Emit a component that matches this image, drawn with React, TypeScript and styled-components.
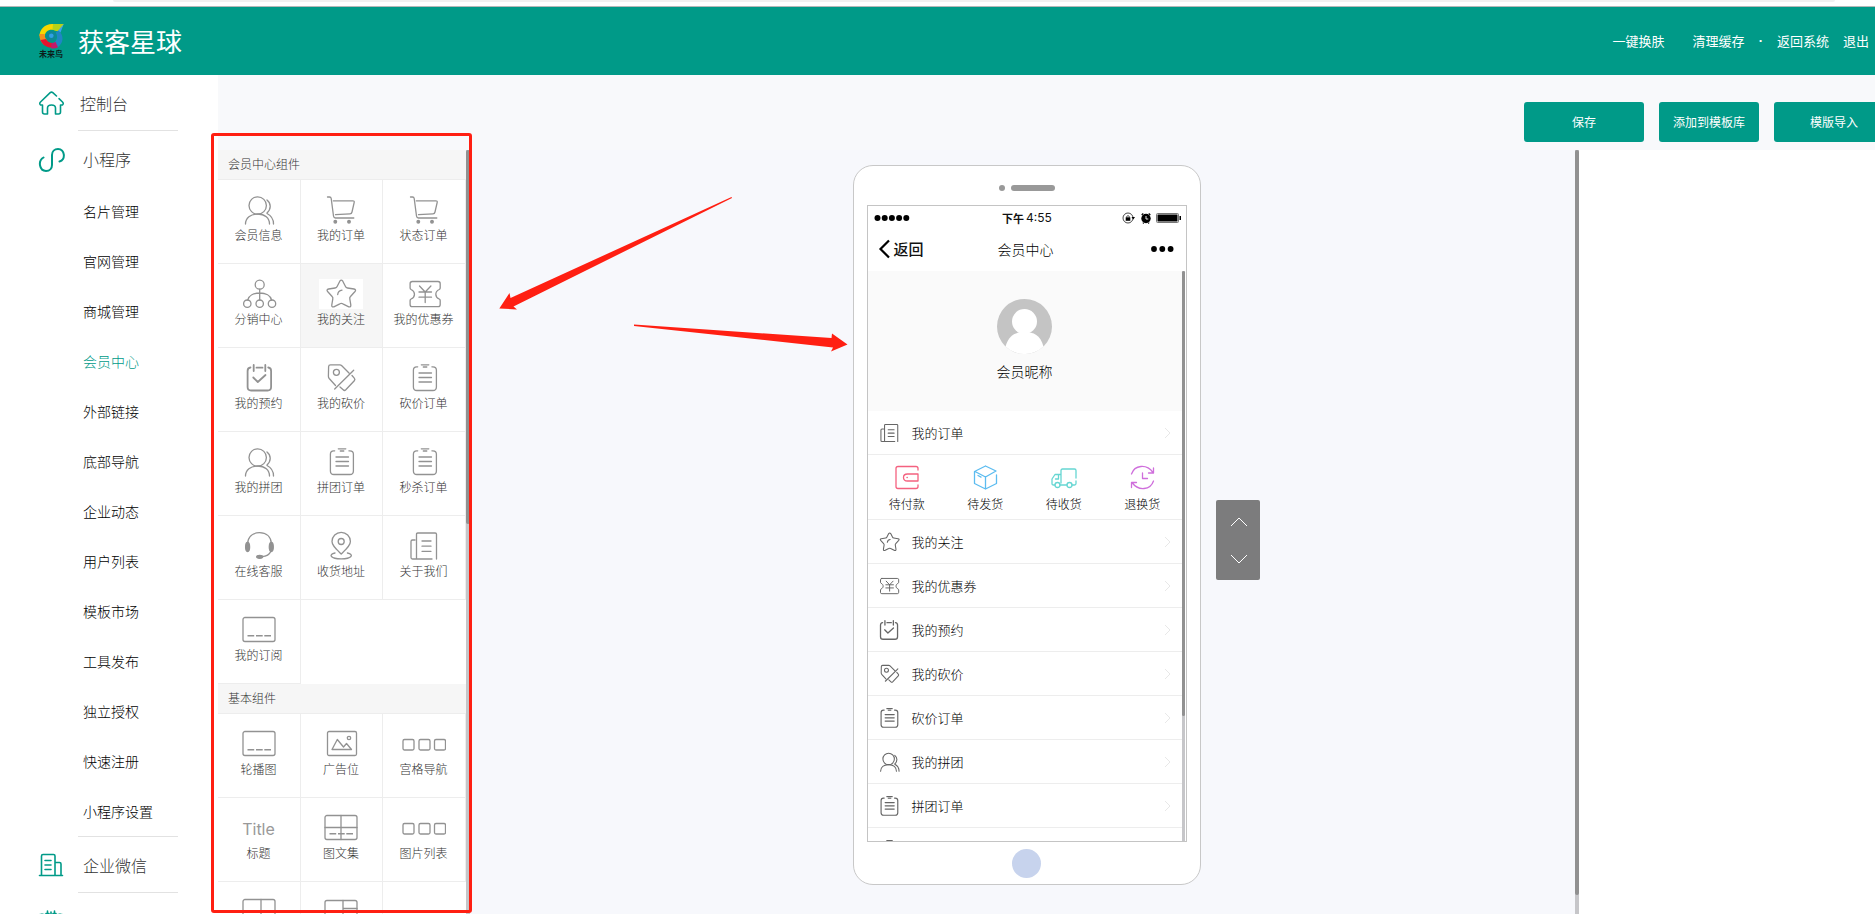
import React from "react";
import styled, { createGlobalStyle } from "styled-components";

const GREEN = "#009a88";
const LINE = "#ededed";
const RED = "#ff1f12";

const GlobalStyle = createGlobalStyle`
  * { box-sizing: border-box; }
  body {
    margin: 0;
    background: #fff;
    color: #111;
    font-family: "Noto Sans CJK SC", "Liberation Sans", sans-serif;
    font-size: 14px;
    font-weight: 300;
  }
  a { color: inherit; text-decoration: none; }
  button { font: inherit; color: inherit; border: 0; padding: 0; background: none; cursor: pointer; }
  svg { display: block; }
`;

/* ---------- icons ---------- */

type IconName =
  | "people" | "cart" | "share" | "star" | "coupon" | "calendar" | "tag" | "clipboard"
  | "headset" | "pin" | "news" | "banner" | "image" | "grid" | "imageText" | "columns" | "window";

const shapes: Record<IconName, React.ReactNode> = {
  people: (
    <>
      <circle cx="20.7" cy="10.5" r="8.7" />
      <path d="M8.5 29c0-6 5-10 12.200-10S32.500 23 32.500 29M30 5c4.300 3.500 4.300 9 0 13M30 18.500c4 2 6.500 5.500 6.500 10.500" />
    </>
  ),
  cart: (
    <>
      <path d="M8.500 2h2q1.500 0 1.700 1.500L14.500 21q.3 2 2 2h18.300M14.300 5.800h19.500q1.700 0 1.400 1.500L33 17q-.4 1.700-2 1.800l-14.500.8" />
      <circle cx="16.300" cy="26.700" r="1.300" fill="currentColor" />
      <circle cx="30" cy="26.700" r="1.300" fill="currentColor" />
    </>
  ),
  share: (
    <>
      <circle cx="22.700" cy="5.700" r="4.500" />
      <circle cx="10.300" cy="24.700" r="3.700" />
      <circle cx="22.700" cy="24.700" r="3.700" />
      <circle cx="35" cy="24.700" r="3.700" />
      <path d="M22.700 10.200V21M10.800 21c1-4.500 6-7 11.900-7s10.900 2.500 11.900 7" />
    </>
  ),
  star: (
    <path d="M20.800 2.200q1.500-2 3 0l2.700 5.300q.5 1.300 2 1.500l6.500 1q2.500.5 1 2.500l-4.500 5q-1 1-.7 2.300l1 6q.3 2.600-2 2l-6-3q-1.500-.8-3 0l-6 3q-2.400.6-2-2l1-6q.3-1.300-.7-2.300l-4.500-5q-1.500-2 1-2.500l6.500-1q1.500-.2 2-1.500zM18.700 15.500c.3-2.700 1.800-4 4.300-4.300" />
  ),
  coupon: (
    <path d="M10.300 2.500h25.700q2.200 0 2.200 2.200v4.300q0 1-1 1.500c-4.500 2-4.500 7.500 0 9.500q1 .5 1 1.500v4q0 2.200-2.200 2.200H10.300q-2.200 0-2.200-2.200v-4q0-1 1-1.500c4.500-2 4.500-7.500 0-9.500q-1-.5-1-1.500V4.700q0-2.200 2.200-2.200zM17.500 7l5.700 6 5.700-6M17 13h12.500M17 18.200h12.500M23.200 13v10.500" />
  ),
  calendar: (
    <path strokeWidth="1.800" d="M13.500 4.500q-2.900.3-2.900 3.500v16q0 3.500 3.500 3.500h16.500q3.500 0 3.500-3.500V8q0-3.200-2.900-3.500M16.700 2v6M28.300 2v6M19.500 4.700h6M16.300 14.500l4.500 4.500 7.700-7" />
  ),
  tag: (
    <>
      <path d="M30 10l-7.200-7.300q-.8-.8-2-.8H11.500q-1.800 0-1.900 1.800l-.2 9.600q0 1.200.8 2.200l6.300 7M34.700 7.300L15.700 26M33 12.500l2.300 2.700q1.200 1.300 0 2.600l-8.500 9q-1.300 1.300-2.600 0L21 24" />
      <circle cx="17.400" cy="9.300" r="3" />
    </>
  ),
  clipboard: (
    <path d="M15.700 3.800h-1q-3.300 0-3.300 3.500v16.700q0 3.500 3.500 3.500h16q3.500 0 3.500-3.500V7.300q0-3.500-3.500-3.500h-1M19.300 1.800h7.500M21.300 4h3.500M17 10h12.500M17 14.500h12.500M17 19h12.500" />
  ),
  headset: (
    <>
      <path d="M10.500 13C11 5.500 16 1.700 22.500 1.700S34 5.500 34.500 13M34 20c-1.500 3.500-4.500 5.500-9 5.700" />
      <ellipse cx="10.600" cy="16" rx="2" ry="4.500" fill="currentColor" />
      <ellipse cx="34.300" cy="16" rx="2" ry="4.500" fill="currentColor" />
      <ellipse cx="22.700" cy="25.800" rx="3" ry="1.500" fill="currentColor" />
    </>
  ),
  pin: (
    <>
      <path d="M22.200 23C16.500 17.500 13 14.500 13 10.500a9.200 9.200 0 0 1 18.400 0c0 4-3.500 7-9.200 12.500zM16 22c-7 1.500-4.500 5.800 6.200 5.800S35.400 23.500 28.400 22" />
      <circle cx="22.200" cy="10.500" r="3" />
    </>
  ),
  news: (
    <path d="M30 28H10.500q-1.500 0-1.500-1.500V10.500Q9 9 10.500 9h2.500M14.500 28V3.300q0-1.300 1.300-1.300h17.400q1.300 0 1.300 1.300V28M20 10h9M20 15.200h9M20 20.300h9" />
  ),
  banner: (
    <>
      <rect x="6" y="2.500" width="32" height="24" rx="2" />
      <path strokeWidth="1.600" strokeLinecap="butt" d="M10.500 20.700h6.700M19 20.700h6.700M27.300 20.700h6.700" />
    </>
  ),
  image: (
    <>
      <rect x="8.500" y="2.500" width="29" height="24" rx="1.500" />
      <circle cx="30" cy="9" r="1.700" />
      <path d="M13 20.500h19.500l-5-6-3 3.500-6.200-7.500z" />
    </>
  ),
  grid: (
    <>
      <rect x="1" y="10.500" width="11" height="10.500" rx="1.500" />
      <rect x="17" y="10.500" width="11" height="10.500" rx="1.500" />
      <rect x="32.500" y="10.500" width="11" height="10.500" rx="1.500" />
    </>
  ),
  imageText: (
    <>
      <rect x="6" y="2.500" width="32" height="24" rx="2" />
      <path d="M6 14.500h32M22 2.500v24" />
      <path strokeWidth="1.600" strokeLinecap="butt" d="M10.500 20.700h6.700M19 20.700h6.700M27.300 20.700h6.700" />
    </>
  ),
  columns: (
    <>
      <rect x="6" y="2.500" width="32" height="24" rx="2" />
      <path d="M24 2.500v24" />
    </>
  ),
  window: (
    <>
      <rect x="6" y="3.500" width="32" height="24" rx="2" />
      <path d="M24 3.500v24M24 11.500h14" />
    </>
  ),
};

/* list icons are drawn to a common optical size */
const smallBox: Partial<Record<IconName, string>> = {
  coupon: "-1 -1.5 48 33",
  calendar: "3 1 40 27.5",
  clipboard: "3 1 40 27.5",
};

const Glyph = styled.svg<{ $small?: boolean }>`
  flex: none;
  width: ${(p) => (p.$small ? 29 : 44)}px;
  height: ${(p) => (p.$small ? 20 : 30)}px;
  color: ${(p) => (p.$small ? "#666" : "#929292")};
  background: #fff;
  fill: none;
  stroke: currentColor;
  stroke-linecap: round;
  stroke-linejoin: round;
`;

const Icon = ({ name, small }: { name: IconName; small?: boolean }) => (
  <Glyph viewBox={(small && smallBox[name]) || "0 0 44 30"} $small={small} strokeWidth={small ? 1.6 : 1.3} aria-hidden>
    {shapes[name]}
  </Glyph>
);

/* ---------- page frame ---------- */

const Page = styled.div`
  position: relative;
  display: flex;
  flex-direction: column;
  height: 100vh;
  overflow: hidden;
`;

const BrowserEdge = styled.div`
  flex: none;
  height: 7px;
  padding: 0 40px 0 113px;
  border-bottom: 1px solid #b4b8b8;
  &::before {
    content: "";
    display: block;
    height: 2px;
    border-radius: 0 0 4px 4px;
    background: #f1f1f1;
  }
`;

const Header = styled.header`
  flex: none;
  display: flex;
  align-items: center;
  height: 68px;
  padding: 0 6px 0 38px;
  background: ${GREEN};
  color: #fff;
`;

const Brand = styled.h1`
  flex: 1;
  margin: 0 0 0 13px;
  font-size: 26px;
  font-weight: 400;
  line-height: 36px;
`;

const HeaderNav = styled.nav`
  display: flex;
  align-items: center;
  gap: 14px;
  font-size: 13px;
  font-weight: 400;
  line-height: 20px;
`;

const Dot = styled.span`
  font-family: "Liberation Sans", sans-serif;
  font-weight: 700;
`;

const SkinLink = styled.a`
  margin-right: 14px;
`;

const Body = styled.div`
  flex: 1;
  display: flex;
  min-height: 0;
`;

/* ---------- sidebar ---------- */

const Sidebar = styled.nav`
  flex: none;
  width: 218px;
  overflow: hidden;
  background: #fff;
`;

const Section = styled.a<{ $top?: boolean }>`
  display: flex;
  align-items: center;
  gap: ${(p) => (p.$top ? 15 : 18)}px;
  height: 55px;
  padding-left: 38px;
  font-size: 16px;
  line-height: 22px;
  color: #333;
  svg { flex: none; }
`;

const Divider = styled.hr`
  width: 100px;
  height: 1px;
  margin: 0 0 0 78px;
  border: 0;
  background: #e2e2e2;
`;

const SubItem = styled.a<{ $active?: boolean }>`
  display: block;
  height: 50px;
  padding-left: 83px;
  line-height: 50px;
  color: ${(p) => (p.$active ? GREEN : "#000")};
`;

const subItems = [
  "名片管理", "官网管理", "商城管理", "会员中心", "外部链接", "底部导航", "企业动态",
  "用户列表", "模板市场", "工具发布", "独立授权", "快速注册", "小程序设置",
];

const SideIcon = ({ children }: { children: React.ReactNode }) => (
  <svg width="27" height="26" viewBox="0 0 27 26" fill="none" stroke={GREEN} strokeWidth="1.600" strokeLinecap="round" strokeLinejoin="round" aria-hidden>
    {children}
  </svg>
);

/* ---------- workspace ---------- */

const Main = styled.main`
  flex: 1;
  display: flex;
  flex-direction: column;
  min-width: 0;
`;

const Toolbar = styled.div`
  flex: none;
  display: flex;
  justify-content: flex-end;
  gap: 15px;
  height: 75px;
  margin-right: -19px;
  padding-top: 27px;
  background: #f8f9fb;
`;

const ToolButton = styled.button<{ $compact?: boolean }>`
  flex: none;
  width: ${(p) => (p.$compact ? 100 : 120)}px;
  height: 40px;
  padding-bottom: 2px;
  border-radius: 3px;
  background: ${GREEN};
  color: #fff;
  font-size: 12px;
  font-weight: 400;
`;

const Workspace = styled.div`
  flex: 1;
  display: flex;
  min-height: 0;
`;

const PanelWrap = styled.aside`
  position: relative;
  z-index: 1;
  flex: none;
  display: flex;
  width: 252px;
`;

const Panel = styled.div`
  flex: 1;
  overflow: hidden;
  background: #fff;
`;

const ScrollTrack = styled.div<{ $width: number }>`
  flex: none;
  width: ${(p) => p.$width}px;
  background: #c6c6c9;
`;

const ScrollThumb = styled.div<{ $length: string }>`
  height: ${(p) => p.$length};
  border-radius: 2px;
  background: #919191;
`;

const PanelTitle = styled.h2`
  height: 30px;
  margin: 0;
  padding-left: 10px;
  border-bottom: 1px solid ${LINE};
  background: #f6f6f6;
  color: #333;
  font-size: 12px;
  font-weight: 300;
  line-height: 28px;
`;

const TileGrid = styled.div`
  display: grid;
  grid-template-columns: 83px 82px 83px;
`;

const Tile = styled.button<{ $hovered?: boolean }>`
  display: flex;
  flex-direction: column;
  align-items: center;
  height: 84px;
  padding: 15px 1px 0 0;
  border-right: 1px solid ${LINE};
  border-bottom: 1px solid ${LINE};
  background: ${(p) => (p.$hovered ? "#f6f6f6" : "#fff")};
  color: #333;
  font-size: 12px;
  line-height: 20px;
`;

const TitleGlyph = styled.span`
  height: 30px;
  color: #999;
  font-family: Inter, Roboto, sans-serif;
  font-size: 16px;
  font-weight: 400;
  line-height: 32px;
`;

type TileData = [string, IconName | "title"];

const memberTiles: TileData[] = [
  ["会员信息", "people"], ["我的订单", "cart"], ["状态订单", "cart"],
  ["分销中心", "share"], ["我的关注", "star"], ["我的优惠券", "coupon"],
  ["我的预约", "calendar"], ["我的砍价", "tag"], ["砍价订单", "clipboard"],
  ["我的拼团", "people"], ["拼团订单", "clipboard"], ["秒杀订单", "clipboard"],
  ["在线客服", "headset"], ["收货地址", "pin"], ["关于我们", "news"],
  ["我的订阅", "banner"],
];

const basicTiles: TileData[] = [
  ["轮播图", "banner"], ["广告位", "image"], ["宫格导航", "grid"],
  ["标题", "title"], ["图文集", "imageText"], ["图片列表", "grid"],
  ["", "columns"], ["", "window"],
];

const Tiles = ({ items, hovered }: { items: TileData[]; hovered?: string }) => (
  <TileGrid>
    {items.map(([label, icon], i) => (
      <Tile key={i} type="button" $hovered={!!label && label === hovered}>
        {icon === "title" ? <TitleGlyph>Title</TitleGlyph> : <Icon name={icon} />}
        {label}
      </Tile>
    ))}
  </TileGrid>
);

const Highlight = styled.div`
  position: absolute;
  inset: -17px -2px 1px -7px;
  border: 3px solid ${RED};
  border-radius: 3px;
  pointer-events: none;
`;

const Canvas = styled.section`
  position: relative;
  flex: 1;
  display: flex;
  justify-content: center;
  align-items: flex-start;
  min-width: 0;
  padding: 15px 0 0 8px;
  background: #f7f8fc;
`;

const Properties = styled.aside`
  flex: none;
  width: 296px;
  background: #fff;
`;

const Arrows = styled.svg`
  position: absolute;
  top: 30px;
  left: 10px;
  fill: ${RED};
  pointer-events: none;
`;

/* ---------- phone preview ---------- */

const Phone = styled.div`
  position: relative;
  flex: none;
  display: flex;
  flex-direction: column;
  align-items: center;
  width: 348px;
  height: 720px;
  border: 1px solid #c8c8c8;
  border-radius: 20px;
  background: #fff;
`;

const Speaker = styled.div`
  display: flex;
  justify-content: center;
  gap: 6px;
  padding: 19px 0 14px;
  &::before, &::after {
    content: "";
    width: 6px;
    height: 6px;
    border-radius: 3px;
    background: #999;
  }
  &::after { width: 44px; }
`;

const Screen = styled.div`
  display: flex;
  flex-direction: column;
  width: 320px;
  height: 637px;
  border: 1px solid #c4c4c4;
`;

const StatusBar = styled.div`
  flex: none;
  display: grid;
  grid-template-columns: 1fr auto 1fr;
  align-items: center;
  height: 24px;
  padding: 0 5px 0 6px;
  > :last-child { justify-self: end; }
`;

const Clock = styled.span`
  display: flex;
  gap: 2px;
  color: #111;
  font-family: Inter, "Noto Sans CJK SC", sans-serif;
  font-size: 12px;
  font-weight: 400;
  line-height: 20px;
  b { font-family: "Noto Sans CJK SC", sans-serif; font-size: 11px; font-weight: 700; }
`;

const TitleBar = styled.div`
  flex: none;
  display: grid;
  grid-template-columns: 1fr auto 1fr;
  align-items: center;
  height: 41px;
  padding: 0 12px 4px 10px;
  color: #000;
  line-height: 20px;
  > :last-child { justify-self: end; }
`;

const Back = styled.button`
  display: flex;
  align-items: center;
  gap: 4px;
  font-size: 15px;
  font-weight: 500;
  color: #111;
`;

const ScreenBody = styled.div`
  flex: 1;
  display: flex;
  min-height: 0;
  padding-right: 1px;
`;

const Feed = styled.div`
  flex: 1;
  overflow: hidden;
`;

const Profile = styled.div`
  display: flex;
  flex-direction: column;
  align-items: center;
  gap: 7px;
  height: 140px;
  padding-top: 28px;
  background: #fafafa;
  color: #000;
  line-height: 20px;
`;

const ListRow = styled.a`
  display: flex;
  align-items: center;
  height: 44px;
  padding: 0 10px 0 7px;
  border-bottom: 1px solid ${LINE};
  font-size: 13px;
  line-height: 20px;
  span { flex: 1; padding-left: 8px; color: #000; }
`;

const OrderStates = styled.div`
  display: grid;
  grid-template-columns: repeat(4, 1fr);
  height: 65px;
  padding-top: 10px;
  border-bottom: 1px solid ${LINE};
`;

const OrderState = styled.a`
  display: flex;
  flex-direction: column;
  align-items: center;
  gap: 4px;
  font-size: 12px;
  line-height: 20px;
  color: #000;
`;

const rows: [string, IconName][] = [
  ["我的关注", "star"], ["我的优惠券", "coupon"], ["我的预约", "calendar"], ["我的砍价", "tag"],
  ["砍价订单", "clipboard"], ["我的拼团", "people"], ["拼团订单", "clipboard"], ["", "clipboard"],
];

const Row = ({ label, icon }: { label: string; icon: IconName }) => (
  <ListRow href="#">
    <Icon name={icon} small />
    <span>{label}</span>
    <svg width="8" height="12" viewBox="0 0 8 12" fill="none" stroke="#e8e8e8" aria-hidden>
      <path d="M1 1l5 5-5 5" />
    </svg>
  </ListRow>
);

const OrderIcon = ({ color, children }: { color: string; children: React.ReactNode }) => (
  <svg width="26" height="25" viewBox="0 0 26 25" fill="none" stroke={color} strokeWidth="1.300" strokeLinecap="round" strokeLinejoin="round" aria-hidden>
    {children}
  </svg>
);

const HomeButton = styled.div`
  width: 29px;
  height: 29px;
  margin-top: 7px;
  border-radius: 50%;
  background: #c7d3ed;
`;

const MoveControl = styled.div`
  position: absolute;
  top: 334px;
  left: calc(100% + 16px);
  display: flex;
  flex-direction: column;
  width: 44px;
  height: 80px;
  padding: 3px 0;
  border-radius: 2px;
  background: #7c7c7d;
  button { flex: 1; display: grid; place-items: center; padding-left: 2px; }
`;

export default function App() {
  return (
    <Page>
      <GlobalStyle />
      <BrowserEdge />
      <Header>
        <svg width="27" height="36" viewBox="0 0 27 36" aria-label="未来鸟">
          <path d="M1.500 13C1.500 6 7 1 14 1h11.500l-4 7.500-6-1.500c-5-1-8.500 2-8.700 6z" fill="#f8d800" />
          <path d="M15 1h10.500l-4 7.500-7-1.800z" fill="#b5d21a" />
          <path d="M25.700 1l-3.200 8.500-3-1z" fill="#3aa0ee" />
          <path d="M20.500 7.500c6 5 5 13-1 17l-4-4.500c4-2.500 4.500-7 2-10.500z" fill="#1f86c4" />
          <path d="M1.500 11c-.3 5 1.700 8.500 5 11l2.800-4.500Q6.500 15 6.800 11z" fill="#f5901a" />
          <path d="M2.500 17c2 4.800 6 7.800 11.500 7.500l.5-4.500q-4.500 0-6.500-4z" fill="#e5142f" />
          <path d="M13.500 20q2.500 0 4-1.200l2.500 5.500q-3.200 1.800-7 1z" fill="#c01a6a" />
          <circle cx="13.300" cy="12.800" r="5" fill="#0f8796" />
          <circle cx="13.300" cy="12.800" r="2.300" fill="#2f9fe6" />
          <text x="1" y="34" fontSize="8" fontWeight="700" fill="#0c1c1a">未来鸟</text>
        </svg>
        <Brand>获客星球</Brand>
        <HeaderNav>
          <SkinLink href="#">一键换肤</SkinLink>
          <a href="#">清理缓存</a>
          <Dot>·</Dot>
          <a href="#">返回系统</a>
          <a href="#">退出</a>
        </HeaderNav>
      </Header>

      <Body>
        <Sidebar>
          <Section href="#" $top>
            <SideIcon>
              <path d="M18.500 6L14.800 2.700q-1.300-1.200-2.600 0L2.500 12q-1.500 1.700 0 3h2v7q0 2 2 2h3v-6q0-3 4-3t4 3v6h3q2 0 2-2v-7h2q1.500-1.300 0-3l-3.500-3.300" />
            </SideIcon>
            控制台
          </Section>
          <Divider />
          <Section href="#">
            <SideIcon>
              <path strokeWidth="2" d="M5.500 11.500C-.5 15 1.500 25 8 25c4 0 6-3 6-6V9c0-3.500 2.500-6 6-6 7 0 8 11 1.500 12.500" />
            </SideIcon>
            小程序
          </Section>
          {subItems.map((label) => (
            <SubItem key={label} href="#" $active={label === "会员中心"}>{label}</SubItem>
          ))}
          <Divider />
          <Section href="#">
            <SideIcon>
              <path d="M1.500 23.500h23M3.500 23V4q0-1.500 1.500-1.500h10.500q1.500 0 1.500 1.500v19M17 10.500h4.500q1.500 0 1.500 1.500v11M7 8.500h6M7 13h6M7 17.500h6" />
            </SideIcon>
            企业微信
          </Section>
          <Divider />
          <Section href="#">
            <SideIcon>
              <path d="M2 6.500h4M8 5.500h3M15 5.500h3M20 6.500h4M4 6v14q0 3 3 3h12q3 0 3-3V6M9.500 3v4M16.500 3v4M13 4v3" />
            </SideIcon>
          </Section>
        </Sidebar>

        <Main>
          <Toolbar>
            <ToolButton type="button">保存</ToolButton>
            <ToolButton type="button" $compact>添加到模板库</ToolButton>
            <ToolButton type="button">模版导入</ToolButton>
          </Toolbar>
          <Workspace>
            <PanelWrap>
              <Panel>
                <PanelTitle>会员中心组件</PanelTitle>
                <Tiles items={memberTiles} hovered="我的关注" />
                <PanelTitle>基本组件</PanelTitle>
                <Tiles items={basicTiles} />
              </Panel>
              <ScrollTrack $width={4}><ScrollThumb $length="49%" /></ScrollTrack>
              <Highlight />
            </PanelWrap>

            <Canvas>
              <Phone>
                <Speaker />
                <Screen>
                  <StatusBar>
                    <svg width="36" height="8" viewBox="0 0 36 8" aria-hidden>
                      <circle cx="3.500" cy="4" r="3" /><circle cx="10.700" cy="4" r="3" /><circle cx="17.900" cy="4" r="3" />
                      <circle cx="25.100" cy="4" r="3" /><circle cx="32.300" cy="4" r="3" />
                    </svg>
                    <Clock><b>下午</b>4:55</Clock>
                    <svg width="59" height="12" viewBox="0 0 59 12" aria-hidden>
                      <circle cx="6" cy="6" r="5" fill="none" stroke="#333" strokeWidth=".9" />
                      <path d="M9.500 5h3.500l-1.700 2.500z" />
                      <rect x="3.700" y="5.300" width="4.600" height="3.500" />
                      <path d="M4.700 5.500v-1q1.300-1.800 2.600 0v1" fill="none" stroke="#111" strokeWidth=".8" />
                      <circle cx="24" cy="6.500" r="4.700" />
                      <path d="M19.700 3l1.600-1.600M28.300 3l-1.600-1.600M21 11.500l.6-.8M27 11.500l-.6-.8" stroke="#111" strokeWidth="1.400" />
                      <path d="M24 4v3h2.300" fill="none" stroke="#fff" strokeWidth=".9" />
                      <rect x="34.500" y="1.500" width="22" height="9" rx="1" fill="none" stroke="#777" />
                      <rect x="35.500" y="2.500" width="20" height="7" />
                      <rect x="57.500" y="4" width="1.500" height="4" />
                    </svg>
                  </StatusBar>
                  <TitleBar>
                    <Back type="button">
                      <svg width="12" height="20" viewBox="0 0 12 20" fill="none" stroke="#000" strokeWidth="2.200" aria-hidden>
                        <path d="M11 1.500L2.500 10l8.500 8.500" />
                      </svg>
                      返回
                    </Back>
                    <span>会员中心</span>
                    <svg width="24" height="8" viewBox="0 0 24 8" aria-hidden>
                      <circle cx="4" cy="4" r="2.900" /><circle cx="12.300" cy="4" r="2.900" /><circle cx="20.600" cy="4" r="2.900" />
                    </svg>
                  </TitleBar>
                  <ScreenBody>
                    <Feed>
                      <Profile>
                        <svg width="55" height="55" viewBox="0 0 55 55" aria-hidden>
                          <circle cx="27.500" cy="27.500" r="27.500" fill="#c4c4c4" />
                          <circle cx="27.500" cy="22.500" r="12.500" fill="#fff" />
                          <path d="M8.500 47.400C12 36 18 33 27.500 33s15.500 3 19 14.400a27.500 27.500 0 0 1-38 0z" fill="#fff" />
                        </svg>
                        会员昵称
                      </Profile>
                      <Row label="我的订单" icon="news" />
                      <OrderStates>
                        <OrderState href="#">
                          <OrderIcon color="#f4617f">
                            <path d="M24 5V3.500Q24 1.500 22 1.500H4Q2 1.500 2 3.500v18q0 2 2 2h18q2 0 2-2V20M24 9H13.500Q9.500 9 9.500 12.500t4 3.500H24zM13 12.500h.3" />
                          </OrderIcon>
                          待付款
                        </OrderState>
                        <OrderState href="#">
                          <OrderIcon color="#5cbcf0">
                            <path d="M13.500 1L2.500 6.500v12L13.500 24l11-5.500V10M13.500 1l10.500 5-10.500 6L3 6.500M13.500 12v12M6 10.500l3 1.600" />
                          </OrderIcon>
                          待发货
                        </OrderState>
                        <OrderState href="#">
                          <OrderIcon color="#66d6d2">
                            <path d="M10 18V5.500Q10 4 11.500 4h12Q25 4 25 5.500V13M25 16v2.500q0 1.500-1.500 1.500H21M16 20H9M4 20H2.500Q1 20 1 18.500V14l3-4.500h6M4.500 14h3v-4" />
                            <circle cx="6.500" cy="20" r="2.500" /><circle cx="18.500" cy="20" r="2.500" />
                          </OrderIcon>
                          待收货
                        </OrderState>
                        <OrderState href="#">
                          <OrderIcon color="#cf6fdc">
                            <path d="M2.500 9C5.500 0 17.500-1.500 24 7.500M24.500 3v5h-5M24.500 16c-3 9-15 10.500-21.500 1.500M2.500 22.500v-5h5M13.500 8v5.500h5" />
                          </OrderIcon>
                          退换货
                        </OrderState>
                      </OrderStates>
                      {rows.map(([label, icon], i) => <Row key={i} label={label} icon={icon} />)}
                    </Feed>
                    <ScrollTrack $width={3}><ScrollThumb $length="78%" /></ScrollTrack>
                  </ScreenBody>
                </Screen>
                <HomeButton />
                <MoveControl>
                  <button type="button" aria-label="上移">
                    <svg width="18" height="10" viewBox="0 0 18 10" fill="none" stroke="#fff" aria-hidden><path d="M1 9l8-8 8 8" /></svg>
                  </button>
                  <button type="button" aria-label="下移">
                    <svg width="18" height="10" viewBox="0 0 18 10" fill="none" stroke="#fff" aria-hidden><path d="M1 1l8 8 8-8" /></svg>
                  </button>
                </MoveControl>
              </Phone>
              <Arrows width="380" height="180" viewBox="480 180 380 180" aria-hidden>
                <path d="M731.500 197L732 198 513.500 306.500 517 309.500 499.300 308.500 509.500 293 510.500 298z" />
                <path d="M634 324.500L831.500 338 832 333.500 847.500 344.500 831 351.500 833 347.500 634 326z" />
              </Arrows>
            </Canvas>
            <ScrollTrack $width={4}><ScrollThumb $length="calc(100% - 19px)" /></ScrollTrack>
            <Properties />
          </Workspace>
        </Main>
      </Body>
    </Page>
  );
}
